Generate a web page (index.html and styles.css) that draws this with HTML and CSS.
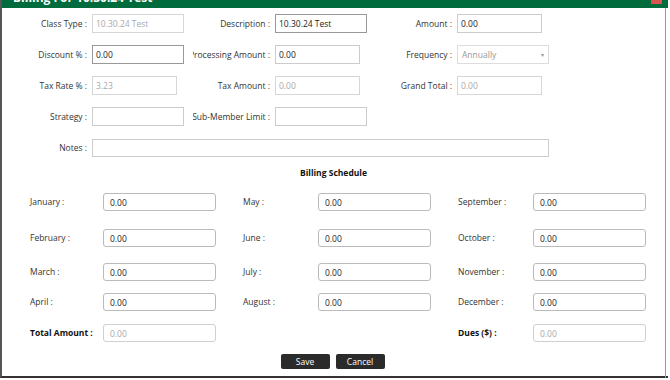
FILE: index.html
```html
<!DOCTYPE html>
<html lang="en">
<head>
  <meta charset="UTF-8" />
  <meta name="viewport" content="width=device-width, initial-scale=1.0"/>
  <title>Billing For 10.30.24 Test</title>
  <link rel="stylesheet" href="styles.css">
</head>
<body>
  <div class="modal">
    <div class="modal-header">
      <span class="modal-title">Billing For 10.30.24 Test</span>
      <span class="close-btn">&times;</span>
    </div>

    <div class="modal-body">
      <div class="info-grid">
        <label><span>Class Type :</span></label>
        <div><input class="field" type="text" value="10.30.24 Test" disabled></div>
        <label><span>Description :</span></label>
        <div><input class="field active" type="text" value="10.30.24 Test"></div>
        <label><span>Amount :</span></label>
        <div><input class="field short" type="text" value="0.00"></div>

        <label><span>Discount % :</span></label>
        <div><input class="field active" type="text" value="0.00"></div>
        <label><span>Processing Amount :</span></label>
        <div><input class="field short" type="text" value="0.00"></div>
        <label><span>Frequency :</span></label>
        <div class="select">Annually <span class="caret">&#9662;</span></div>

        <label><span>Tax Rate % :</span></label>
        <div><input class="field short" type="text" value="3.23" disabled></div>
        <label><span>Tax Amount :</span></label>
        <div><input class="field short" type="text" value="0.00" disabled></div>
        <label><span>Grand Total :</span></label>
        <div><input class="field short" type="text" value="0.00" disabled></div>

        <label><span>Strategy :</span></label>
        <div><input class="field" type="text" value=""></div>
        <label><span>Sub-Member Limit :</span></label>
        <div><input class="field" type="text" value=""></div>
        <div></div>
        <div></div>

        <label><span>Notes :</span></label>
        <div class="notes-cell"><input class="field" type="text" value=""></div>
      </div>

      <h3 class="section-title">Billing Schedule</h3>

      <div class="schedule-grid">
        <label>January :</label>
        <input class="month" type="text" value="0.00">
        <label>May :</label>
        <input class="month" type="text" value="0.00">
        <label>September :</label>
        <input class="month" type="text" value="0.00">

        <label>February :</label>
        <input class="month" type="text" value="0.00">
        <label>June :</label>
        <input class="month" type="text" value="0.00">
        <label>October :</label>
        <input class="month" type="text" value="0.00">

        <label>March :</label>
        <input class="month" type="text" value="0.00">
        <label>July :</label>
        <input class="month" type="text" value="0.00">
        <label>November :</label>
        <input class="month" type="text" value="0.00">

        <label>April :</label>
        <input class="month" type="text" value="0.00">
        <label>August :</label>
        <input class="month" type="text" value="0.00">
        <label>December :</label>
        <input class="month" type="text" value="0.00">

        <label class="strong">Total Amount :</label>
        <input class="month" type="text" value="0.00" disabled>
        <div></div>
        <div></div>
        <label class="strong">Dues ($) :</label>
        <input class="month" type="text" value="0.00" disabled>
      </div>

      <div class="actions">
        <button class="btn">Save</button>
        <button class="btn">Cancel</button>
      </div>
    </div>
  </div>
</body>
</html>
```

FILE: styles.css
```css
body {
  margin: 0;
  padding: 0;
  font-family: 'Open Sans', 'Noto Sans', sans-serif;
  font-size: 8.5px;
  color: #333;
  background: #fff;
  height: 380px;
  overflow: hidden;
}

.modal {
  margin-top: -22px;
  width: 668px;
  height: 400px;
  border-left: 2px solid #555;
  border-bottom: 2px solid #333;
  box-sizing: border-box;
  background: #fff;
}

.modal-header {
  height: 30px;
  background: #006b3c;
  display: flex;
  align-items: flex-end;
  justify-content: space-between;
  padding: 0 6px 0 11px;
}

.modal-title {
  color: #fff;
  font-weight: bold;
  font-size: 12px;
  line-height: 14px;
  margin-bottom: 3px;
}

.close-btn {
  width: 11px;
  height: 12px;
  margin-bottom: 4px;
  background: #d9534f;
  color: #fff;
  font-size: 10px;
  line-height: 10px;
  text-align: center;
  border-radius: 1px;
}

.modal-body {
  border-right: 1px solid #999;
  width: 664px;
  height: 370px;
  box-sizing: border-box;
}

.info-grid {
  display: grid;
  grid-template-columns: 90px 101px 82px 100px 82px 92px;
  grid-auto-rows: 19px;
  row-gap: 12px;
  padding-top: 6px;
  align-items: center;
}

.info-grid label {
  display: flex;
  justify-content: flex-end;
  padding-right: 5px;
  white-space: nowrap;
  overflow: hidden;
}

.info-grid label span {
  flex-shrink: 0;
}

.field {
  width: 92px;
  height: 19px;
  box-sizing: border-box;
  border: 1px solid #ccc;
  padding: 0 3px;
  font-family: inherit;
  font-size: 8.5px;
  color: #222;
  background: #fff;
  display: block;
}

.field.short {
  width: 85px;
}

.field.active {
  border-color: #999;
}

.field:disabled {
  color: #aaa;
  background: #fff;
  border-color: #d6d6d6;
}

.select {
  width: 92px;
  height: 19px;
  box-sizing: border-box;
  border: 1px solid #ddd;
  padding: 0 4px;
  color: #999;
  display: flex;
  align-items: center;
  justify-content: space-between;
}

.caret {
  font-size: 6px;
  color: #999;
}

.notes-cell {
  grid-column: 2 / 7;
}

.notes-cell .field {
  width: 457px;
  height: 18px;
}

.section-title {
  margin: 10px 0 0;
  text-align: center;
  font-size: 8.5px;
  font-weight: bold;
  color: #111;
  line-height: 12px;
}

.schedule-grid {
  display: grid;
  grid-template-columns: 73px 113px 102px 113px 102px 113px;
  grid-template-rows: 36px 34px 30px 31px 18px;
  padding-left: 28px;
  margin-top: 14px;
  align-items: start;
}

.schedule-grid label {
  line-height: 18px;
}

.schedule-grid label:nth-child(6n+3),
.schedule-grid label:nth-child(6n+5) {
  padding-left: 27px;
}

.schedule-grid .strong {
  font-weight: bold;
  color: #111;
}

.month {
  width: 113px;
  height: 18px;
  box-sizing: border-box;
  border: 1px solid #bbb;
  border-radius: 3px;
  padding: 0 6px;
  font-family: inherit;
  font-size: 8.5px;
  color: #222;
  background: #fff;
}

.month:disabled {
  color: #aaa;
  border-color: #d0d0d0;
  background: #fff;
}

.actions {
  display: flex;
  justify-content: center;
  gap: 6px;
  margin-top: 12px;
  padding-right: 2px;
}

.btn {
  width: 49px;
  height: 15px;
  background: #2b2b2b;
  color: #fff;
  border: none;
  border-radius: 2px;
  font-family: inherit;
  font-size: 8.5px;
  padding: 0;
  cursor: pointer;
}
```
